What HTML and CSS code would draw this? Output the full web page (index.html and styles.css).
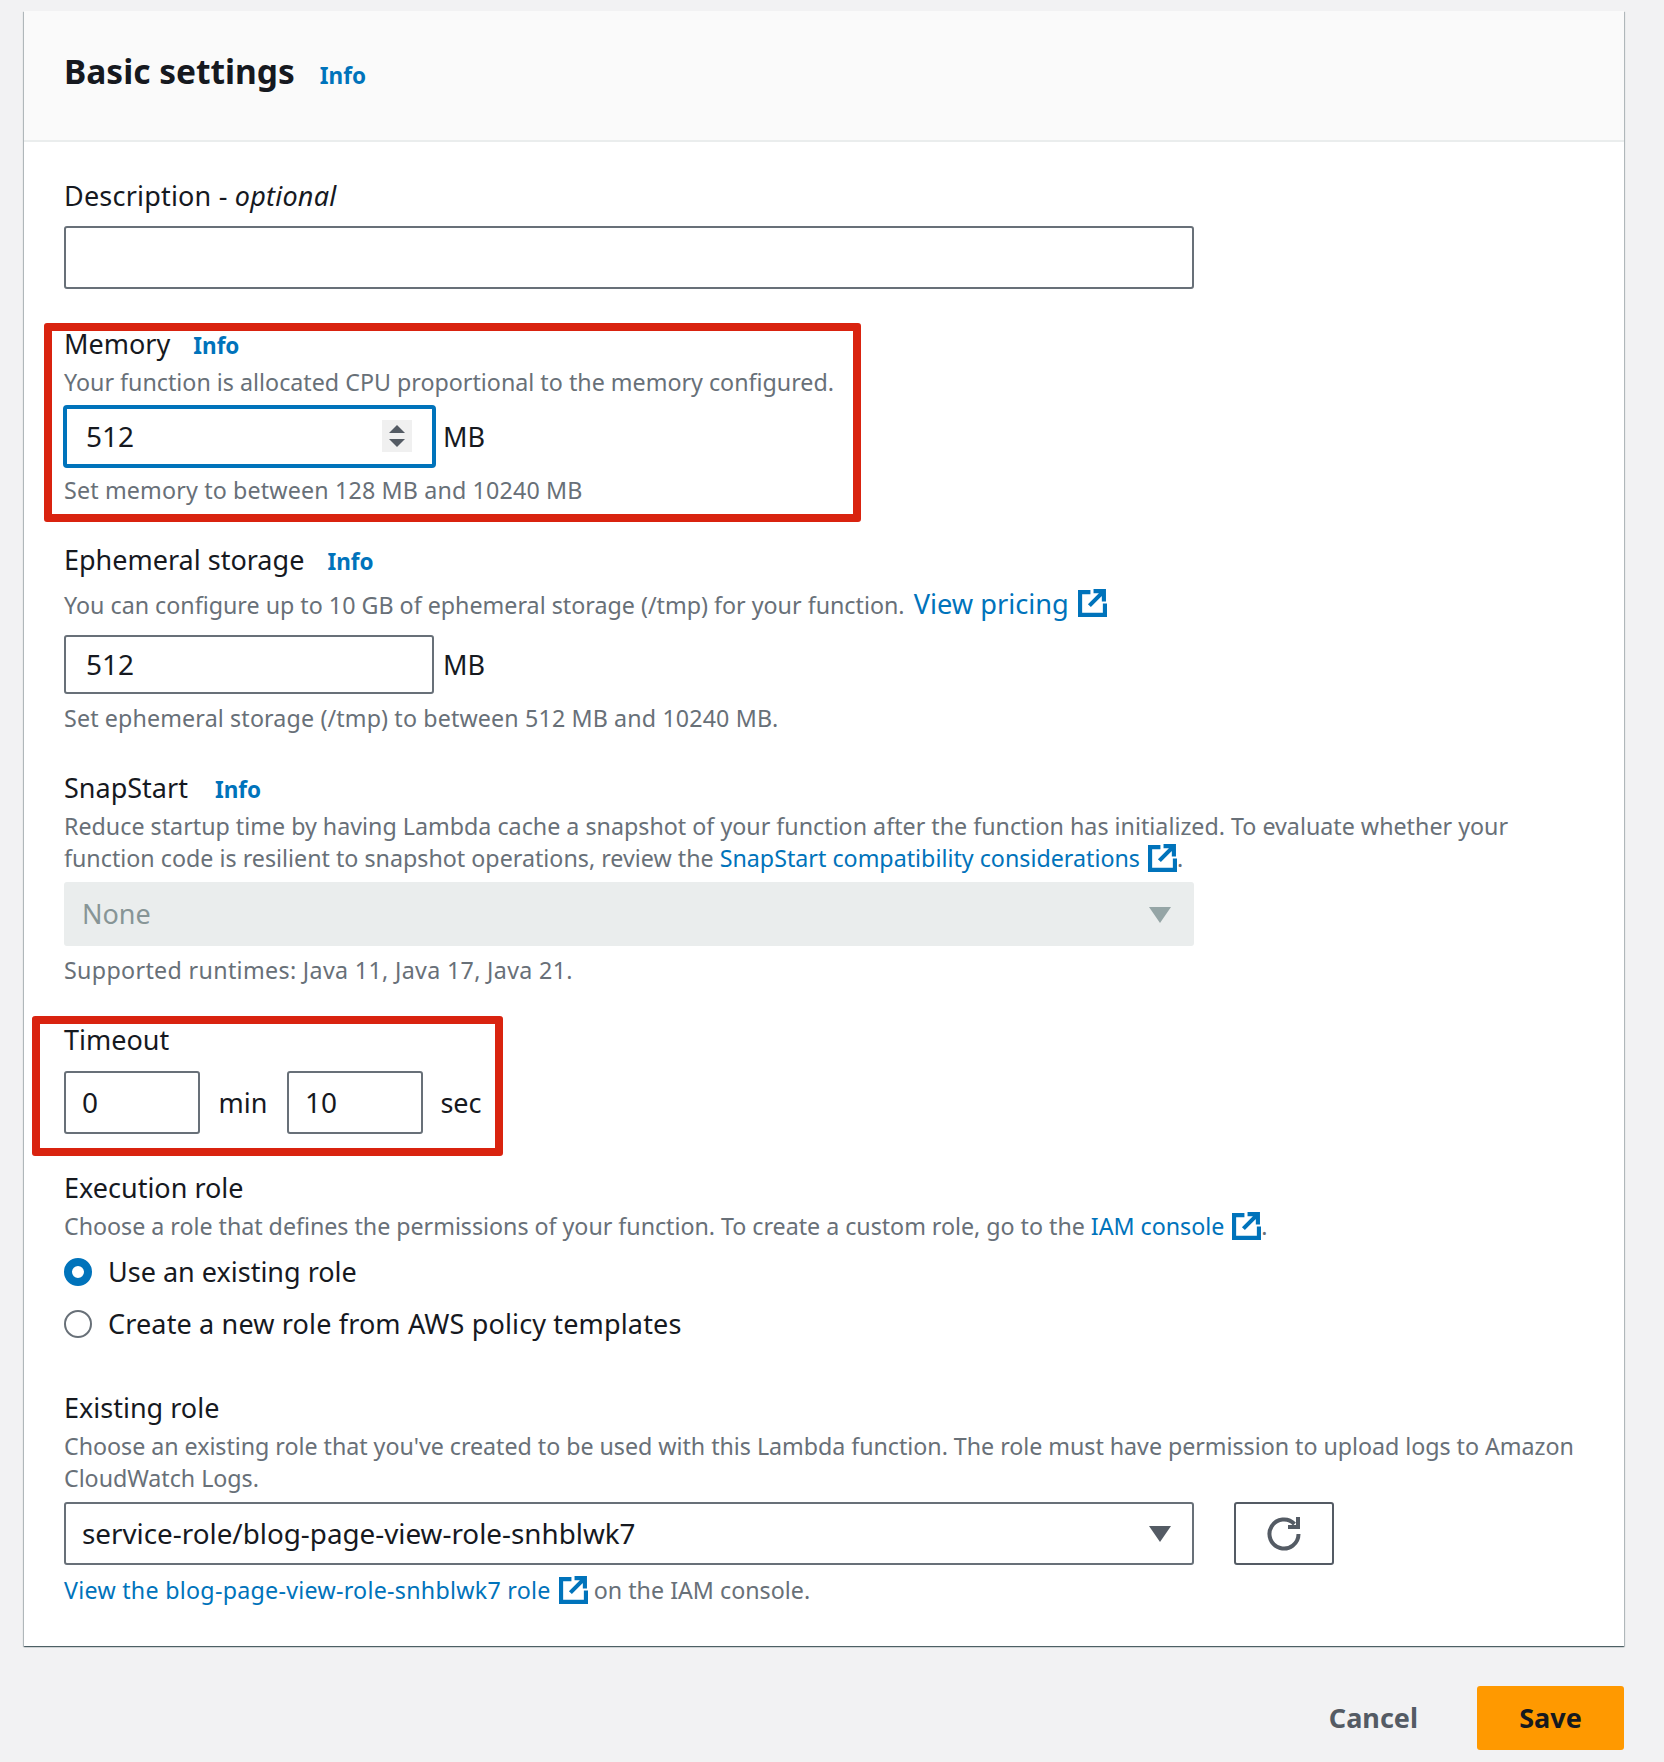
FILE: index.html
```html
<!DOCTYPE html>
<html lang="en">
<head>
    <meta charset="UTF-8">
    <meta name="viewport" content="width=device-width, initial-scale=1.0">
    <title>Basic settings</title>
    <link rel="stylesheet" href="styles.css">
</head>
<body>
    <svg class="icon-defs" aria-hidden="true">
        <symbol id="external" viewBox="0 0 28 28">
            <path d="M12 4H2v22h24V15" fill="none" stroke="currentColor" stroke-width="4"/>
            <path d="M11 17L24 4M15 3h10v10" fill="none" stroke="currentColor" stroke-width="4"/>
        </symbol>
    </svg>

    <div class="panel">
        <div class="panel-header">
            <h2>Basic settings</h2>
            <a class="info info-header">Info</a>
        </div>

        <div class="panel-body">
            <div class="label description-label">Description - <em>optional</em></div>
            <div class="input input-wide description-input"></div>

            <div class="callout memory">
                <div class="label label-short">Memory <a class="info">Info</a></div>
                <div class="hint">Your function is allocated CPU proportional to the memory configured.</div>
                <div class="input-row">
                    <div class="input input-focus">
                        <span class="value">512</span>
                        <span class="spinner"><i class="up"></i><i class="down"></i></span>
                    </div>
                    <span class="unit">MB</span>
                </div>
                <div class="hint memory-limit">Set memory to between 128 MB and 10240 MB</div>
            </div>

            <div class="label ephemeral">Ephemeral storage <a class="info">Info</a></div>
            <div class="hint ephemeral-hint">You can configure up to 10 GB of ephemeral storage (/tmp) for your function. <a class="link link-large">View pricing</a><svg class="external external-large"><use href="#external"/></svg></div>
            <div class="input-row ephemeral-row">
                <div class="input input-size"><span class="value">512</span></div>
                <span class="unit">MB</span>
            </div>
            <div class="hint ephemeral-limit">Set ephemeral storage (/tmp) to between 512 MB and 10240 MB.</div>

            <div class="label snapstart">SnapStart <a class="info">Info</a></div>
            <div class="hint snapstart-hint">Reduce startup time by having Lambda cache a snapshot of your function after the function has initialized. To evaluate whether your<br>function code is resilient to snapshot operations, review the <a class="link">SnapStart compatibility considerations</a><svg class="external"><use href="#external"/></svg>.</div>
            <div class="select select-disabled">None<span class="caret"></span></div>
            <div class="hint snapstart-runtimes">Supported runtimes: Java 11, Java 17, Java 21.</div>

            <div class="callout timeout">
                <div class="label timeout-label">Timeout</div>
                <div class="input-row timeout-row">
                    <div class="input input-time value">0</div>
                    <span class="unit">min</span>
                    <div class="input input-time value">10</div>
                    <span class="unit">sec</span>
                </div>
            </div>

            <div class="label execution">Execution role</div>
            <div class="hint execution-hint">Choose a role that defines the permissions of your function. To create a custom role, go to the <a class="link">IAM console</a><svg class="external"><use href="#external"/></svg>.</div>
            <div class="radio radio-first"><span class="radio-dot checked"></span>Use an existing role</div>
            <div class="radio radio-second"><span class="radio-dot"></span>Create a new role from AWS policy templates</div>

            <div class="label existing">Existing role</div>
            <div class="hint existing-hint">Choose an existing role that you've created to be used with this Lambda function. The role must have permission to upload logs to Amazon<br>CloudWatch Logs.</div>
            <div class="select-row">
                <div class="select value">service-role/blog-page-view-role-snhblwk7<span class="caret"></span></div>
                <button class="refresh" type="button">
                    <svg width="36" height="36" viewBox="0 0 36 36">
                        <path d="M28.5 8A14.5 14.5 0 1 0 32.5 18" fill="none" stroke="currentColor" stroke-width="4"/>
                        <path d="M32 1v10H22" fill="none" stroke="currentColor" stroke-width="4"/>
                    </svg>
                </button>
            </div>
            <div class="hint role-link"><a class="link">View the blog-page-view-role-snhblwk7 role</a><svg class="external"><use href="#external"/></svg> on the IAM console.</div>
        </div>
    </div>

    <div class="footer">
        <button class="btn-cancel" type="button">Cancel</button>
        <button class="btn-save" type="button">Save</button>
    </div>
</body>
</html>
```

FILE: styles.css
```css
* { box-sizing: border-box; }
html, body { margin: 0; }
body {
    width: 1664px;
    height: 1762px;
    padding: 11px 40px 0 24px;
    overflow: hidden;
    background-color: #f2f2f3;
    color: #16191f;
    font-family: "Noto Sans", sans-serif;
    font-size: 27px;
    line-height: 32px;
}
.icon-defs { display: none; }

.panel {
    height: 1635px;
    background-color: white;
    box-shadow: 0 1px 1px 0 rgba(0, 28, 36, 0.5), 1px 1px 1px 0 rgba(0, 28, 36, 0.2), -1px 1px 1px 0 rgba(0, 28, 36, 0.2);
}
.panel-header {
    display: flex;
    align-items: center;
    height: 131px;
    padding: 0 40px 10px;
    background-color: #fafafa;
    border-bottom: 2px solid #eaeded;
}
.panel-header h2 { margin: 0; font-size: 33.5px; font-weight: 700; line-height: 40px; }
.panel-body { padding: 39px 40px 0; }

.info { margin-left: 16px; color: #0073bb; font-size: 22.5px; font-weight: 700; }
.info-header { margin: 10px 0 0 25px; }
.link { color: #0073bb; }
.link-large { margin-left: 3px; font-size: 27.2px; }
.external { display: inline-block; width: 29px; height: 29px; margin-left: 8px; vertical-align: -5px; color: #0073bb; }
.external-large { margin-left: 9px; vertical-align: -3px; }

.label { height: 32px; }
.hint { color: #687078; font-size: 23.25px; line-height: 32px; }
.value { flex: 1; font-size: 28px; }
.unit { flex: none; color: #16191f; }

.input {
    display: flex;
    align-items: center;
    flex: none;
    height: 63px;
    border: 2px solid #687078;
    border-radius: 3px;
    background-color: white;
}
.input-wide { width: 1130px; }
.input-row { display: flex; align-items: center; }
.input-row .unit { margin-left: 9px; }

.input-focus { width: 373px; padding: 0 20px 2px 19px; border: 4px solid #0073bb; border-radius: 4px; }
.input-size { width: 370px; height: 59px; padding: 0 20px 1px; }
.input-time { flex: none; width: 136px; padding: 0 16px 2px; }

.spinner {
    display: flex;
    flex-direction: column;
    align-items: center;
    justify-content: center;
    gap: 6px;
    width: 30px;
    height: 32px;
    background-color: #f0f0f0;
}
.spinner i { width: 0; height: 0; border-left: 8px solid transparent; border-right: 8px solid transparent; }
.spinner .up { border-bottom: 8px solid #545b64; }
.spinner .down { border-top: 8px solid #545b64; }

.select {
    position: relative;
    display: flex;
    align-items: center;
    flex: none;
    width: 1130px;
    height: 63px;
    padding: 0 16px 2px;
    border: 2px solid #687078;
    border-radius: 3px;
    font-size: 27.8px;
}
.caret {
    position: absolute;
    right: 21px;
    top: 22px;
    width: 0;
    height: 0;
    border-left: 11px solid transparent;
    border-right: 11px solid transparent;
    border-top: 16px solid #545b64;
}
.select-disabled { height: 64px; padding: 0 16px 0 18px; border: none; background-color: #eaeded; color: #879596; font-size: 27px; }
.select-disabled .caret { border-top-color: #95a5a6; right: 23px; top: 25px; }
.select-row { display: flex; align-items: stretch; gap: 40px; margin-top: 8px; }
.refresh {
    display: flex;
    align-items: center;
    justify-content: center;
    width: 100px;
    padding: 0;
    border: 2px solid #545b64;
    border-radius: 3px;
    background-color: white;
    color: #545b64;
}

.callout { border: 8px solid #d9230f; border-radius: 3px; }
.memory { width: 817px; height: 199px; margin: 34px 0 0 -20px; padding: 0 12px; }
.label-short { height: 28px; line-height: 26px; }
.memory .hint { margin-top: 7px; }
.memory .input-row { margin: 7px 0 0 -1px; }
.memory .memory-limit { margin-top: 6px; letter-spacing: 0.15px; }
.memory .unit { margin-left: 7px; }

.description-label { line-height: 30px; letter-spacing: 0.2px; }
.description-input { margin-top: 13px; }
.ephemeral { margin-top: 22px; }
.ephemeral-hint { margin-top: 12px; }
.ephemeral-row { margin-top: 14px; }
.ephemeral-limit { margin-top: 8px; letter-spacing: 0.13px; }
.snapstart { margin-top: 38px; }
.snapstart .info { margin-left: 20px; }
.snapstart-hint { margin-top: 6px; }
.select-disabled { margin-top: 8px; }
.snapstart-runtimes { margin-top: 8px; letter-spacing: 0.33px; }

.timeout { width: 471px; height: 140px; margin: 30px 0 0 -32px; padding: 0 0 0 24px; }
.timeout-label { height: 36px; line-height: 32px; }
.timeout-row { margin-top: 11px; }
.timeout-row .unit { width: 86px; margin: 0 1px 0 0; text-align: center; }
.timeout-row .unit:last-child { width: 66px; margin: 0 0 0 5px; }

.execution { margin-top: 16px; }
.execution-hint { margin-top: 6px; letter-spacing: -0.03px; }
.radio { display: flex; align-items: center; height: 32px; }
.radio-first { margin-top: 14px; }
.radio-second { margin-top: 20px; letter-spacing: 0.15px; }
.radio-dot { width: 28px; height: 28px; margin-right: 16px; border: 2px solid #687078; border-radius: 50%; }
.radio-dot.checked { border: 8px solid #0073bb; }

.existing { margin-top: 52px; }
.existing-hint { margin-top: 6px; letter-spacing: -0.04px; }
.role-link { margin-top: 9px; }
.role-link .link { letter-spacing: 0.26px; }

.footer { display: flex; justify-content: flex-end; align-items: center; margin-top: 40px; }
.footer button { border: none; font-family: inherit; font-size: 27px; font-weight: 700; cursor: pointer; }
.btn-cancel { margin-right: 59px; padding: 0 0 2px; background: none; color: #545b64; }
.btn-save { width: 147px; height: 64px; padding: 0 0 2px; border-radius: 3px; background-color: #ff9900; color: #16191f; }
```
